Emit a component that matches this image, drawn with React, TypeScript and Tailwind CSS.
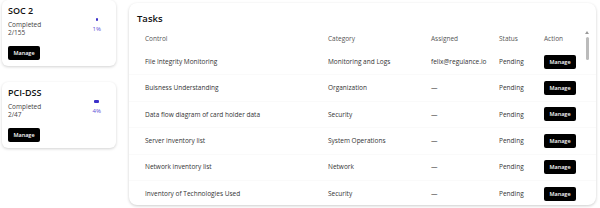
import React from 'react';

const frameworks = [
  { name: 'SOC 2', done: 2, total: 155, pct: 1, bar: 'w-[2px]' },
  { name: 'PCI-DSS', done: 2, total: 47, pct: 4, bar: 'w-[5px]' },
];

const tasks = [
  { control: 'File Integrity Monitoring', category: 'Monitoring and Logs', assigned: 'felix@regulance.io' },
  { control: 'Buisness Understanding', category: 'Organization', assigned: '—' },
  { control: 'Data flow diagram of card holder data', category: 'Security', assigned: '—' },
  { control: 'Server inventory list', category: 'System Operations', assigned: '—' },
  { control: 'Network inventory list', category: 'Network', assigned: '—' },
  { control: 'Inventory of Technologies Used', category: 'Security', assigned: '—' },
];

const cols = 'grid grid-cols-[183px_103px_68px_45px_1fr] pl-4';

export default function App() {
  return (
    <div className="flex h-[208px] w-[600px] gap-[13px] overflow-hidden bg-white pl-[2px] pr-1 font-['Open_Sans',sans-serif] text-[#333]">
      <div className="flex w-[114px] shrink-0 flex-col gap-4">
        {frameworks.map((fw) => (
          <div key={fw.name} className="h-[66px] rounded-md bg-white px-[6px] pt-[5px] shadow-[0_1px_3px_rgba(0,0,0,0.18)]">
            <div className="flex justify-between">
              <div>
                <p className="text-[9px] leading-[12px] font-semibold text-[#111]">{fw.name}</p>
                <p className="mt-[4px] text-[6.5px] leading-[8px] text-[#444]">Completed</p>
                <p className="text-[6.5px] leading-[8px] text-[#444]">{fw.done}/{fw.total}</p>
              </div>
              <div className="mr-[9px] mt-[13px] flex flex-col items-center">
                <div className={`h-[3px] rounded-[1px] bg-[#3b2fc9] ${fw.bar}`} />
                <p className="mt-[5px] text-[6px] leading-[7px] text-[#5b4fd6]">{fw.pct}%</p>
              </div>
            </div>
            <button className="mt-[6px] h-[14px] w-[32px] rounded-[2px] bg-black text-[5.5px] font-semibold text-white">
              Manage
            </button>
          </div>
        ))}
      </div>

      <div className="relative mt-[3px] h-[202px] flex-1 overflow-hidden rounded-lg bg-white shadow-[0_1px_3px_rgba(0,0,0,0.2)]">
        <p className="pl-2 pt-[9px] text-[9.5px] leading-[13px] font-semibold text-[#111]">Tasks</p>
        <div className={`${cols} mt-[4px] h-[20px] items-center text-[6.5px] text-[#555]`}>
          <span>Control</span>
          <span>Category</span>
          <span>Assigned</span>
          <span>Status</span>
          <span>Action</span>
        </div>
        {tasks.map((t) => (
          <div key={t.control} className={`${cols} h-[26.4px] items-center border-b border-[#fafafa] text-[6.5px] text-[#333]`}>
            <span>{t.control}</span>
            <span>{t.category}</span>
            <span>{t.assigned}</span>
            <span>Pending</span>
            <span>
              <button className="h-[14px] w-[32px] rounded-[2px] bg-black text-[5.5px] font-semibold text-white">Manage</button>
            </span>
          </div>
        ))}
        <div className="absolute right-[7px] top-[28px] flex flex-col items-center">
          <div className="h-0 w-0 border-x-[2px] border-b-[3px] border-x-transparent border-b-[#999]" />
          <div className="mt-[3px] h-[23px] w-[3px] rounded-full bg-[#bbb]" />
        </div>
      </div>
    </div>
  );
}
